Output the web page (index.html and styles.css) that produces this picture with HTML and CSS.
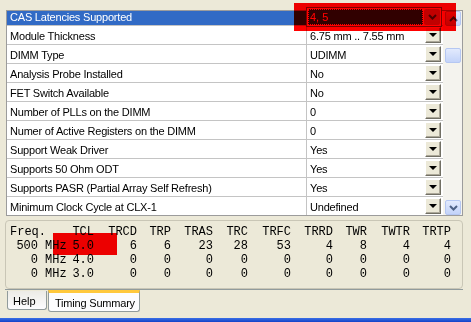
FILE: index.html
```html
<!DOCTYPE html>
<html>
<head>
  <title>SPD Editor - DDR3 Properties</title>
  <link rel="stylesheet" href="styles.css">
</head>
<body>

<div class="window">

  <!-- Property grid -->
  <div class="grid">
    <div class="rows">
      <div class="rows-inner">
        <div class="row selected">
          <span class="name">CAS Latencies Supported</span>
          <span class="value"></span>
        </div>
        <div class="row">
          <span class="name">Module Thickness</span>
          <span class="value"><span class="text">6.75 mm .. 7.55 mm</span><span class="dd"><i class="tri"></i></span></span>
        </div>
        <div class="row">
          <span class="name">DIMM Type</span>
          <span class="value"><span class="text">UDIMM</span><span class="dd"><i class="tri"></i></span></span>
        </div>
        <div class="row">
          <span class="name">Analysis Probe Installed</span>
          <span class="value"><span class="text">No</span><span class="dd"><i class="tri"></i></span></span>
        </div>
        <div class="row">
          <span class="name">FET Switch Available</span>
          <span class="value"><span class="text">No</span><span class="dd"><i class="tri"></i></span></span>
        </div>
        <div class="row">
          <span class="name">Number of PLLs on the DIMM</span>
          <span class="value"><span class="text">0</span><span class="dd"><i class="tri"></i></span></span>
        </div>
        <div class="row">
          <span class="name">Numer of Active Registers on the DIMM</span>
          <span class="value"><span class="text">0</span><span class="dd"><i class="tri"></i></span></span>
        </div>
        <div class="row">
          <span class="name">Support Weak Driver</span>
          <span class="value"><span class="text">Yes</span><span class="dd"><i class="tri"></i></span></span>
        </div>
        <div class="row">
          <span class="name">Supports 50 Ohm ODT</span>
          <span class="value"><span class="text">Yes</span><span class="dd"><i class="tri"></i></span></span>
        </div>
        <div class="row">
          <span class="name">Supports PASR (Partial Array Self Refresh)</span>
          <span class="value"><span class="text">Yes</span><span class="dd"><i class="tri"></i></span></span>
        </div>
        <div class="row">
          <span class="name">Minimum Clock Cycle at CLX-1</span>
          <span class="value"><span class="text">Undefined</span><span class="dd"><i class="tri"></i></span></span>
        </div>
      </div>
    </div>

    <div class="scrollbar">
      <div class="sb-btn">
        <svg width="9" height="6" viewBox="0 0 9 6"><path d="M1 5 L4.5 1.5 L8 5" fill="none" stroke="#4d6185" stroke-width="2"/></svg>
      </div>
      <div class="sb-track"><div class="sb-btn sb-thumb"></div></div>
      <div class="sb-btn">
        <svg width="9" height="6" viewBox="0 0 9 6"><path d="M1 1 L4.5 4.5 L8 1" fill="none" stroke="#4d6185" stroke-width="2"/></svg>
      </div>
    </div>
  </div>

  <!-- dropdown editor open on the selected row -->
  <div class="editor">
    <span class="editor-text">4, 5</span>
    <span class="editor-btn">
      <svg width="9" height="6" viewBox="0 0 9 6"><path d="M1 1 L4.5 4.5 L8 1" fill="none" stroke="#4d6185" stroke-width="2"/></svg>
    </span>
  </div>

  <!-- Timing summary page -->
  <div class="tabpage">
    <div class="groupbox">
      <div class="timings">
        <span class="left span2">Freq.</span>
        <span>TCL</span><span>TRCD</span><span>TRP</span><span>TRAS</span><span>TRC</span>
        <span>TRFC</span><span>TRRD</span><span>TWR</span><span>TWTR</span><span>TRTP</span>

        <span>500</span><span class="left unit">MHz</span>
        <span>5.0</span><span>6</span><span>6</span><span>23</span><span>28</span>
        <span>53</span><span>4</span><span>8</span><span>4</span><span>4</span>

        <span>0</span><span class="left unit">MHz</span>
        <span>4.0</span><span>0</span><span>0</span><span>0</span><span>0</span>
        <span>0</span><span>0</span><span>0</span><span>0</span><span>0</span>

        <span>0</span><span class="left unit">MHz</span>
        <span>3.0</span><span>0</span><span>0</span><span>0</span><span>0</span>
        <span>0</span><span>0</span><span>0</span><span>0</span><span>0</span>
      </div>
      <div class="mark mark-cell"></div>
    </div>
  </div>

  <div class="tabs">
    <div class="tab">Help</div>
    <div class="tab active">Timing Summary</div>
  </div>

  <div class="mark mark-top"></div>

  <div class="taskbar"></div>
</div>

</body>
</html>
```

FILE: styles.css
```css
body {
  margin: 0;
  background: #ece9d8;
  font-family: "Liberation Sans", Arial, sans-serif;
  font-size: 11px;
  color: #000;
}

.window {
  position: relative;
  width: 471px;
  height: 322px;
  overflow: hidden;
  box-sizing: border-box;
  padding-top: 10px;
  display: flex;
  flex-direction: column;
}

/* Property grid */
.grid {
  margin-left: 6px;
  width: 457px;
  height: 206px;
  box-sizing: border-box;
  border: 1px solid #9c9c9c;
  background: #fff;
  display: flex;
}

.rows {
  width: 436px;
  overflow: hidden;
}

.rows-inner {
  margin-top: -4px;
}

.row {
  display: flex;
  height: 19px;
  box-sizing: border-box;
  border-bottom: 1px solid #c4c4c4;
}

.name {
  width: 300px;
  flex: none;
  box-sizing: border-box;
  border-right: 1px solid #c4c4c4;
  padding: 2px 0 0 3px;
  line-height: 16px;
  letter-spacing: -0.2px;
  white-space: nowrap;
  overflow: hidden;
}

.row.selected .name {
  background: #316ac5;
  color: #fff;
}

.value {
  flex: 1;
  display: flex;
  padding-left: 3px;
  letter-spacing: -0.2px;
}

.value .text {
  flex: 1;
  padding-top: 2px;
  line-height: 16px;
  white-space: nowrap;
}

/* little combo buttons */
.dd {
  width: 16px;
  height: 16px;
  margin: 1px 2px 0 0;
  box-sizing: border-box;
  border: 1px solid;
  border-color: #fff #716f64 #716f64 #fff;
  box-shadow: inset -1px -1px 0 #aca899;
  background: #ece9d8;
  display: flex;
  align-items: center;
  justify-content: center;
}

.tri {
  width: 0;
  height: 0;
  border-left: 4px solid transparent;
  border-right: 4px solid transparent;
  border-top: 4px solid #000;
  margin-left: -1px;
}

/* Scrollbar */
.scrollbar {
  width: 19px;
  box-sizing: border-box;
  padding: 0 1px 0 2px;
  background: #f4f3ee;
  display: flex;
  flex-direction: column;
}

.sb-btn {
  height: 15px;
  box-sizing: border-box;
  border: 1px solid #b5c7f2;
  border-radius: 2px;
  background: linear-gradient(#e2eafd, #c3d3f9);
  display: flex;
  align-items: center;
  justify-content: center;
}

.sb-track {
  flex: 1;
  padding-top: 22px;
}

/* open dropdown */
.editor {
  position: absolute;
  left: 306px;
  top: 7px;
  width: 136px;
  height: 20px;
  box-sizing: border-box;
  border: 1px solid #7f9db9;
  background: #fff;
  padding: 1px;
  display: flex;
  gap: 1px;
}

.editor-text {
  flex: 1;
  background: #316ac5;
  color: #fff;
  outline: 1px dotted #fff;
  outline-offset: -1px;
  padding-left: 2px;
  line-height: 16px;
}

.editor-btn {
  width: 16px;
  border-radius: 2px;
  background: #c1d3fb;
  display: flex;
  align-items: center;
  justify-content: center;
}

/* Timing page */
.tabpage {
  margin: 4px 8px 0 5px;
  border-bottom: 1px solid #919b9c;
}

.groupbox {
  position: relative;
  height: 69px;
  box-sizing: border-box;
  border: 1px solid #c9c6b6;
  border-radius: 4px;
  padding: 4px 0 0 4px;
}

.timings {
  display: grid;
  grid-template-columns: 28px 34px 22px 43px 34px 42px 35px 43px 42px 34px 43px 41px;
  font-family: "Liberation Mono", "Courier New", monospace;
  font-size: 12px;
  line-height: 14px;
  text-align: right;
  white-space: nowrap;
}

.timings .left {
  text-align: left;
}

.timings .span2 {
  grid-column: span 2;
}

.timings .unit {
  padding-left: 7px;
}

/* red highlight boxes */
.mark {
  position: absolute;
  background: #ff0000;
  mix-blend-mode: multiply;
}

.mark-top {
  left: 294px;
  top: 3px;
  width: 162px;
  height: 28px;
}

.mark-cell {
  left: 47px;
  top: 12px;
  width: 64px;
  height: 22px;
}

/* Tabs */
.tabs {
  display: flex;
  align-items: flex-start;
  padding-left: 7px;
  height: 22px;
}

.tab {
  box-sizing: border-box;
  border: 1px solid #919b9c;
  border-top: none;
  border-radius: 0 0 3px 3px;
  margin-top: 1px;
  height: 19px;
  width: 40px;
  padding: 3px 0 0 5px;
  line-height: 15px;
  background: linear-gradient(#ecebe6, #fcfcfe);
}

.tab.active {
  margin: 0 0 0 1px;
  height: 22px;
  width: 92px;
  padding: 3px 0 0 6px;
  border-top: 3px solid #ffc83c;
  background: #fcfcfe;
  letter-spacing: -0.2px;
}

.taskbar {
  margin-top: auto;
  height: 4px;
  background: linear-gradient(#3a6fe6, #1442c8);
}
```
